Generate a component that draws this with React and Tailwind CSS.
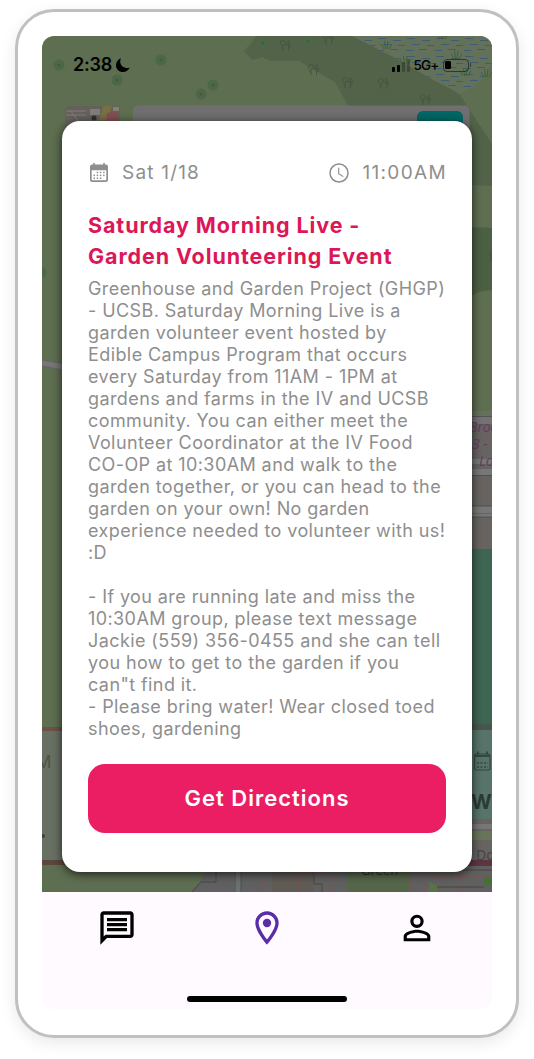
import React from 'react';
import { MdOutlineMessage, MdOutlineLocationOn, MdPersonOutline } from 'react-icons/md';

const event = {
  date: 'Sat 1/18',
  time: '11:00AM',
  title: ['Saturday Morning Live -', 'Garden Volunteering Event'],
  description: [
    'Greenhouse and Garden Project (GHGP)',
    '- UCSB. Saturday Morning Live is a',
    'garden volunteer event hosted by',
    'Edible Campus Program that occurs',
    'every Saturday from 11AM - 1PM at',
    'gardens and farms in the IV and UCSB',
    'community. You can either meet the',
    'Volunteer Coordinator at the IV Food',
    'CO-OP at 10:30AM and walk to the',
    'garden together, or you can head to the',
    'garden on your own! No garden',
    'experience needed to volunteer with us!',
    ':D',
    '',
    '- If you are running late and miss the',
    '10:30AM group, please text message',
    'Jackie (559) 356-0455 and she can tell',
    'you how to get to the garden if you',
    'can"t find it.',
    '- Please bring water! Wear closed toed',
    'shoes, gardening',
  ],
};

const CalendarIcon = ({ className }) => (
  <svg viewBox="0 0 18 20" className={className} fill="currentColor">
    <path
      fillRule="evenodd"
      d="M3.2 1.5V0h1.6v1.5h8.4V0h1.6v1.5H16a2 2 0 0 1 2 2V17a2 2 0 0 1-2 2H2a2 2 0 0 1-2-2V3.5a2 2 0 0 1 2-2zM1.7 7.2v9.2a.9.9 0 0 0 .9.9h12.8a.9.9 0 0 0 .9-.9V7.2z"
    />
    {[3.5, 6.7, 9.9, 13.1].map((x) => (
      <g key={x}>
        {x > 4 && <rect x={x} y="8.7" width="1.5" height="1.5" />}
        <rect x={x} y="11.6" width="1.5" height="1.5" />
        {x < 13 && <rect x={x} y="14.5" width="1.5" height="1.5" />}
      </g>
    ))}
  </svg>
);

const ClockIcon = ({ className }) => (
  <svg viewBox="0 0 20 20" className={className} fill="none" stroke="currentColor" strokeLinecap="round" strokeLinejoin="round">
    <circle cx="10" cy="10" r="9" strokeWidth="1.5" />
    <path d="M9.7 5v5.7l4.2 2.7" strokeWidth="1.1" />
  </svg>
);

// Small tree pair symbol used on the wooded areas
const Trees = ({ x, y }) => (
  <g transform={`translate(${x} ${y})`} fill="none" stroke="#445640" strokeWidth="0.9">
    <circle cx="2.8" cy="3" r="2.5" />
    <path d="M3 5.5v5.5M8.5 4v7M8.5 8.5l2.5-2.5M3 9L1 7" />
    <path d="M6.5 5l2-4.5 2 4.5z" />
  </g>
);

const Marsh = ({ x, y }) => (
  <path
    d={`M${x} ${y}l-3-5M${x + 1.5} ${y}l-1-8M${x + 3} ${y}l1-8M${x + 5} ${y}l3-5`}
    stroke="#3d5d34"
    strokeWidth="0.9"
    fill="none"
  />
);

const MapBackground = () => (
  <svg viewBox="42 36 450 856" className="absolute inset-0 h-full w-full" fontFamily="Noto Sans">
    <defs>
      <pattern id="water" width="29" height="18" patternUnits="userSpaceOnUse">
        <path d="M1 2.5h8M16 4.5h8M6 8.5h8M21 9.5h7M0 14.5h7M13 13.5h8" stroke="#395a75" strokeWidth="0.9" />
      </pattern>
    </defs>
    <rect x="42" y="36" width="450" height="856" fill="#5e6e50" />

    {/* woods */}
    <path d="M256 36h98l37 15 69 44 32 49v42l-21-1v-40H362l-14-39-13-24-36-21h-28l-9-4-10 3-8-9 9-10z" fill="#526349" />
    <path d="M471 227l21 1v62c-8 0-15 2-21 6z" fill="#4b5f43" />
    <path d="M352 36H492V63c-6 13-17 27-32 30L435 81 395 58z" fill="#63715a" />
    <path d="M352 36H492V63c-6 13-17 27-32 30L435 81 395 58z" fill="url(#water)" />

    <Trees x="280" y="40" />
    <Trees x="323" y="33" />
    <Trees x="308" y="64" />
    <Trees x="342" y="77" />
    <Trees x="378" y="78" />
    <Trees x="420" y="94" />
    <Marsh x={384} y={49} />
    <Marsh x={403} y={64} />
    <Marsh x={440} y={39} />
    <Marsh x={454} y={59} />
    <Marsh x={463} y={76} />
    <Marsh x={484} y={77} />
    <path d="M492 250l-2 4 2 3M491 257v4" stroke="#3f513b" fill="none" />

    {[[59, 65], [161, 60], [117, 80], [213, 85], [201, 94], [308, 41], [263, 43], [41, 272.5]].map(([cx, cy]) => (
      <g key={`${cx}-${cy}`}>
        <circle cx={cx} cy={cy} r="5.5" fill="#4d6749" />
        <circle cx={cx} cy={cy} r="1.6" fill="#445b3d" />
      </g>
    ))}

    {/* photo thumbnail */}
    <rect x="65" y="106" width="55" height="34" rx="4" fill="#65605c" />
    <path d="M66 111h20M66 115h20M70 110l9 12" stroke="#817e79" strokeWidth="1" />
    <path d="M90 109h10v6H90z" fill="#7e7d7c" />
    <path d="M99 120l4-14h9l-5 14z" fill="#786f43" />
    <path d="M107 113l11-1v9h-12z" fill="#844d51" />
    <path d="M113 107h6v4h-6z" fill="#858076" />
    <circle cx="94" cy="118" r="2.5" fill="#303030" />

    {/* search bar */}
    <rect x="133" y="105.5" width="336.5" height="40" rx="5" fill="#6f6f6f" />
    <rect x="417" y="111" width="46" height="34" rx="6" fill="#006765" />

    {/* left side path and card */}
    <path d="M42 363l22 4" stroke="#767676" strokeWidth="6" />
    <path d="M42 360l22 4M42 366l22 4" stroke="#606060" strokeWidth="0.7" />
    <rect x="42" y="592" width="21" height="4" fill="#5e6e50" />
    <rect x="42" y="727" width="21" height="4" fill="#6d5147" />
    <rect x="42" y="731" width="21" height="129" fill="#687064" />
    <text x="36" y="768" fill="#4b5448" fontFamily="Inter" fontSize="17">M</text>
    <circle cx="43" cy="836" r="2" fill="#3d4539" />

    {/* buildings on the right */}
    <rect x="471" y="411" width="21" height="481" fill="#666361" />
    <path d="M471 411h21v5h-21z" fill="#68705d" />
    <path d="M471 416h21v8h-21z" fill="#727372" />
    <path d="M471 459h21v5h-21zM471 469h21v6h-21zM471 506h21v7h-21zM471 514h21v3h-21z" fill="#777777" />
    <path d="M471 416.5h21M471 475.5h21M471 506h21M471 517h21" stroke="#4c4b4a" strokeWidth="0.8" />
    <g fill="#633f5f" fontSize="14" fontStyle="italic">
      <text x="469" y="432">Broc</text>
      <text x="472" y="449">3 -</text>
      <text x="479" y="466">Lo</text>
    </g>
    <rect x="471" y="549" width="21" height="175" fill="#3e6552" />
    <rect x="471" y="724" width="21" height="6" fill="#48564e" />
    <rect x="471" y="730" width="21" height="89" fill="#57736a" />
    <text x="471" y="809" fill="#293b34" fontFamily="Inter" fontSize="20" fontWeight="700">W</text>
    <g stroke="#354941" fill="none">
      <rect x="474.5" y="754" width="15.5" height="16" rx="1.5" strokeWidth="1.2" />
      <path d="M475 756h15M478 751.5v3M487 751.5v3" strokeWidth="2" />
      <path d="M477 763h11M477 767h11" strokeDasharray="2 1.5" strokeWidth="1.5" />
    </g>
    <path d="M471 824h21v5h-21z" fill="#777" />
    <path d="M471 831h21v9h-21z" fill="#68745a" />
    <text x="476" y="860" fill="#454545" fontSize="14">Do</text>

    {/* streets along the bottom */}
    <rect x="42" y="865" width="450" height="27" fill="#616060" />
    <path d="M42 860h172l-22 32H42z" fill="#5e6e50" />
    <path d="M42 860h40v5H42z" fill="#5c473d" />
    <path d="M450 860h42v6h-42z" fill="#5c3540" />
    <path d="M192 892l9-10h15v-18" fill="none" stroke="#484848" />
    <path d="M234 864h7v28h-7z" fill="#6d7070" />
    <path d="M235 864v28M241 864v28" stroke="#465055" />
    <path d="M272 866h42v26h-42z" fill="#615a55" />
    <path d="M314 872v12h8v8" stroke="#4b4744" fill="none" />
    <path d="M347 866h62v26h-62z" fill="#566749" />
    <path d="M262 872v20M299 873v19M299 873h32v19M410 872v20M424 892v-16h68M460 876v16" stroke="#894c4b" strokeWidth="1.3" strokeDasharray="4 3" fill="none" />
    <text x="361" y="875" fill="#2e392a" fontSize="13">Green</text>
    <path d="M410 870h82M436 887h48" stroke="#4a4343" />
    <circle cx="488" cy="881" r="4.5" fill="#467035" />
    <path d="M429 881l8 5v6h-8z" fill="#587246" />
  </svg>
);

const StatusBar = () => (
  <div className="relative flex h-[85px] items-start justify-between pl-[31px] pr-[21px] pt-[18px] text-black">
    <div className="flex h-[22px] items-center gap-1">
      <span className="text-[18px] font-semibold leading-[22px] tracking-[-0.2px]">2:38</span>
      <svg viewBox="0 0 14 14" className="h-3.5 w-3.5" fill="currentColor">
        <path d="M5 .3C2 1.400 0 4 0 7.200 0 11 3 14 6.900 14c3.100 0 5.800-1.900 6.800-4.600-1 .4-2.100.6-3.100.5C6.800 9.600 4.200 7 4.200 3.500c0-1.100.3-2.200.8-3.200z" />
      </svg>
    </div>
    <div className="flex h-[22px] items-center gap-[3px]">
      <div className="flex h-[13px] items-end gap-[1.5px]">
        <span className="h-[5px] w-[3.5px] rounded-[1px] bg-black" />
        <span className="h-[7px] w-[3.5px] rounded-[1px] bg-black" />
        <span className="h-2.5 w-[3.5px] rounded-[1px] bg-black/25" />
        <span className="h-[13px] w-[3.5px] rounded-[1px] bg-black/25" />
      </div>
      <span className="text-[13.5px] font-medium tracking-[-0.8px]">5G+</span>
      <div className="flex items-center gap-px pl-px">
        <div className="h-[13px] w-[26px] rounded-[4px] border border-black/50 p-[1.5px]">
          <div className="h-full w-[6px] rounded-[1.5px] bg-black" />
        </div>
        <span className="h-1 w-[1.5px] rounded-r-full bg-black/50" />
      </div>
    </div>
  </div>
);

const EventCard = () => (
  <div className="relative mx-5 h-[751px] rounded-[18px] bg-white px-[26px] pt-10 shadow-[0_2px_10px_rgba(0,0,0,0.7)]">
    <div className="flex h-6 items-center justify-between text-[19px] text-[#8e8e8e]">
      <div className="flex items-center">
        <CalendarIcon className="ml-[2px] h-5 w-[18px]" />
        <span className="ml-[14px] tracking-[1.2px]">{event.date}</span>
      </div>
      <div className="flex items-center">
        <ClockIcon className="h-5 w-5" />
        <span className="-mr-px ml-[13px] tracking-[1.35px]">{event.time}</span>
      </div>
    </div>

    <h1 className="mt-[25px] whitespace-nowrap text-[21.5px] font-bold leading-[31px] tracking-[0.9px] text-[#dc1758]">
      {event.title.map((line) => (
        <span key={line} className="block">{line}</span>
      ))}
    </h1>

    <p className="mt-[6px] whitespace-nowrap text-[18px] leading-[22px] tracking-[0.41px] text-[#8e8e8e]">
      {event.description.map((line, i) => (
        <span key={i} className="block h-[22px]">{line}</span>
      ))}
    </p>

    <button className="mt-6 h-[69px] w-full rounded-[17px] bg-[#eb1e63] text-[22px] font-semibold tracking-[1px] text-white">
      Get Directions
    </button>
  </div>
);

const BottomNav = () => (
  <nav className="flex h-[117px] flex-col items-center bg-[#fefaff]">
    <div className="grid w-full grid-cols-3 justify-items-center pt-4 text-black">
      <MdOutlineMessage className="size-10" />
      <MdOutlineLocationOn className="size-10 text-[#5a2da8]" />
      <MdPersonOutline className="size-10" />
    </div>
    <div className="mt-12 h-[6px] w-[160px] rounded-full bg-black" />
  </nav>
);

const App = () => {
  return (
    <div className="h-[1059px] w-[534px] overflow-hidden bg-white pl-[15px] pt-[9px] font-['Inter',sans-serif]">
      <div className="h-[1029px] w-[504px] rounded-[39px] border-[3px] border-[#c0c0c0] bg-white p-6 shadow-[0_5px_16px_rgba(0,0,0,0.09)]">
        <div className="w-[450px] overflow-hidden rounded-[12px]">
          <div className="relative h-[856px] overflow-hidden">
            <MapBackground />
            <StatusBar />
            <EventCard />
          </div>
          <BottomNav />
        </div>
      </div>
    </div>
  );
};

export default App;
